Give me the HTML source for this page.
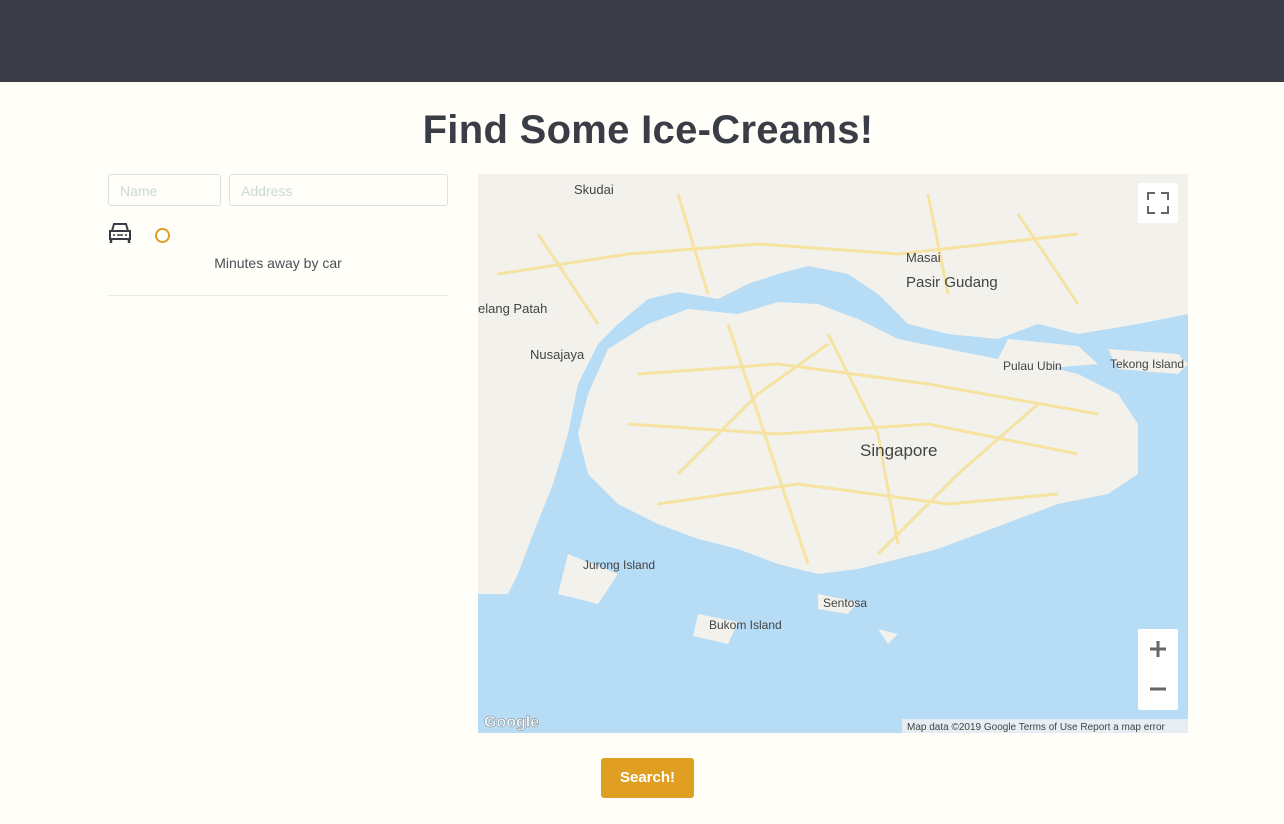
<!DOCTYPE html>
<html><head><meta charset="utf-8"><style>
body{margin:0;width:1284px;height:824px;background:#fffef9;font-family:"Liberation Sans",sans-serif;position:relative;overflow:hidden}
.top{position:absolute;left:0;top:0;width:1284px;height:82px;background:#3a3d46}
h1{position:absolute;left:0;width:1296px;top:108px;margin:0;text-align:center;font-size:40px;font-weight:bold;color:#3a3d46;letter-spacing:0.3px}
.in{position:absolute;top:174px;height:32px;border:1px solid #dde3dc;border-radius:3px;box-sizing:border-box;color:#cbdad0;font-size:14px;padding:8px 11px}
.map{position:absolute;left:478px;top:174px;width:710px;height:559px;overflow:hidden}
.btn{position:absolute;left:601px;top:758px;width:93px;height:40px;background:#e09e22;border-radius:3px;color:#fff;font-weight:bold;font-size:15px;text-align:center;line-height:40px}
.lbl{font-family:"Liberation Sans",sans-serif}
</style></head><body>
<div class="top"></div>
<h1>Find Some Ice-Creams!</h1>
<div class="in" style="left:108px;width:113px">Name</div>
<div class="in" style="left:229px;width:219px">Address</div>
<svg style="position:absolute;left:108px;top:222px" width="24" height="22" viewBox="0 0 24 22"><path d="M4 9 L6 2 H18 L20 9" fill="none" stroke="#3a3d46" stroke-width="2"/><rect x="2" y="9" width="20" height="8" fill="none" stroke="#3a3d46" stroke-width="2"/><path d="M3 17v4M21 17v4" stroke="#3a3d46" stroke-width="2.5"/><path d="M9 13h6" stroke="#3a3d46" stroke-width="1.5"/><circle cx="6" cy="13" r="1" fill="#3a3d46"/><circle cx="18" cy="13" r="1" fill="#3a3d46"/></svg>
<div style="position:absolute;left:155px;top:228px;width:11px;height:11px;border:2px solid #e09e22;border-radius:50%"></div>
<div style="position:absolute;left:108px;width:340px;top:255px;text-align:center;font-size:14px;color:#4a4f57">Minutes away by car</div>
<div style="position:absolute;left:108px;width:340px;top:295px;height:1px;background:#e6e8e2"></div>
<div class="map">
<svg width="710" height="559" viewBox="0 0 710 559">
<rect width="710" height="559" fill="#b6dcf6"/>
<path d="M0 0H710V140L660 150 600 160 560 150 520 165 470 160 430 150 400 120 370 100 330 92 300 100 270 110 240 125 200 118 170 125 140 150 120 170 100 210 90 260 75 310 55 360 40 400 30 420 0 420Z" fill="#f2f1ec"/>
<path d="M130 175L170 150 210 135 260 140 300 128 340 130 380 145 420 165 470 175 520 185 560 190 600 200 640 220 660 250 660 300 630 320 580 330 540 345 500 360 460 375 420 385 380 395 340 400 300 390 260 375 220 365 180 350 140 330 110 300 100 260 110 220Z" fill="#f2f1ec"/>
<path d="M530 165 L600 172 620 190 560 195 520 185Z" fill="#f2f1ec"/>
<path d="M630 175L700 180 710 190 700 200 640 195Z" fill="#f2f1ec"/>
<path d="M90 380L140 400 120 430 80 420Z M220 440L260 448 250 470 215 462Z M340 420L380 428 370 440 340 435Z M400 455L420 460 410 470Z" fill="#f2f1ec"/>
<g fill="none" stroke="#f6e3a1" stroke-width="3">
<path d="M150 250 L300 260 450 250 600 280"/><path d="M250 150 L300 300 L330 390"/><path d="M180 330 L320 310 L470 330 L580 320"/><path d="M350 160 L400 260 L420 370"/><path d="M20 100 L150 80 L280 70 L420 80 L600 60"/><path d="M200 20 L230 120"/><path d="M450 20 L470 120"/>
<path d="M160 200 L300 190 L450 210 L620 240"/><path d="M200 300 L280 220 L350 170"/><path d="M400 380 L480 300 L560 230"/><path d="M60 60 L120 150"/><path d="M540 40 L600 130"/>
</g>
<g class="lbl" fill="#444" font-size="13">
<text x="96" y="20">Skudai</text><text x="428" y="88">Masai</text><text x="428" y="113" font-size="15">Pasir Gudang</text>
<text x="0" y="139">elang Patah</text><text x="52" y="185">Nusajaya</text><text x="525" y="196" font-size="12">Pulau Ubin</text><text x="632" y="194" font-size="12">Tekong Island</text>
<text x="382" y="282" font-size="17">Singapore</text><text x="105" y="395" font-size="12">Jurong Island</text><text x="345" y="433" font-size="12">Sentosa</text><text x="231" y="455" font-size="12">Bukom Island</text>
</g>
<text x="6" y="553" font-size="16" font-weight="bold" fill="#fff" stroke="#777" stroke-width=".5">Google</text>
<rect x="424" y="545" width="286" height="14" fill="#f3f3f3" opacity=".8"/>
<text x="429" y="556" font-size="10" fill="#444">Map data ©2019 Google   Terms of Use   Report a map error</text>
<rect x="660" y="9" width="40" height="40" fill="#fff" rx="2"/>
<path d="M670 26v-7h7M683 19h7v7M690 32v7h-7M677 39h-7v-7" fill="none" stroke="#666" stroke-width="2"/>
<rect x="660" y="455" width="40" height="81" fill="#fff" rx="2"/>
<path d="M672 475h16M680 467v16M672 515h16" stroke="#666" stroke-width="3"/>
</svg>
</div>
<div class="btn">Search!</div>
</body></html>
